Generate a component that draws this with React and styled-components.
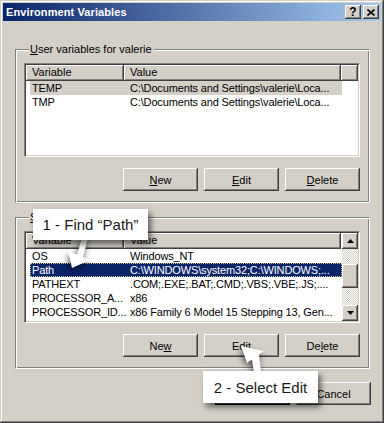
import React from "react";
import styled, { createGlobalStyle } from "styled-components";

const GlobalStyle = createGlobalStyle`
  html, body {
    margin: 0;
    padding: 0;
    background: #d4d0c8;
  }
  body {
    font-family: "Liberation Sans", Arial, sans-serif;
    font-size: 11px;
    color: #000;
  }
`;

const userVars = [
  { name: "TEMP", value: "C:\\Documents and Settings\\valerie\\Loca...", state: "inactive" },
  { name: "TMP", value: "C:\\Documents and Settings\\valerie\\Loca..." },
];

const systemVars = [
  { name: "OS", value: "Windows_NT" },
  { name: "Path", value: "C:\\WINDOWS\\system32;C:\\WINDOWS;...", state: "active" },
  { name: "PATHEXT", value: ".COM;.EXE;.BAT;.CMD;.VBS;.VBE;.JS;...." },
  { name: "PROCESSOR_A...", value: "x86" },
  { name: "PROCESSOR_ID...", value: "x86 Family 6 Model 15 Stepping 13, Gen..." },
];

const VarList = ({ rows, height, scroll }) => (
  <ListView $h={height}>
    <ListBody>
      <HeaderRow>
        <HeaderCell $w={98}>Variable</HeaderCell>
        <HeaderCell $w={217}>Value</HeaderCell>
        {!scroll && <HeaderCell $fill />}
      </HeaderRow>
      {rows.map((r) => (
        <Row key={r.name} $state={r.state}>
          <NameCell>{r.name}</NameCell>
          <ValueCell>{r.value}</ValueCell>
        </Row>
      ))}
    </ListBody>
    {scroll && (
      <ScrollBar>
        <ScrollArrow>
          <svg width="7" height="4" viewBox="0 0 7 4">
            <path d="M3.5 0 L7 4 L0 4 Z" fill="#000" />
          </svg>
        </ScrollArrow>
        <Track>
          <Thumb />
        </Track>
        <ScrollArrow>
          <svg width="7" height="4" viewBox="0 0 7 4">
            <path d="M0 0 L7 0 L3.5 4 Z" fill="#000" />
          </svg>
        </ScrollArrow>
      </ScrollBar>
    )}
  </ListView>
);

const App = () => {
  return (
    <>
      <GlobalStyle />
      <Window>
        <TitleBar>
          <Title>Environment Variables</Title>
          <CaptionButton>?</CaptionButton>
          <CaptionButton $gap>
            <svg width="8" height="7" viewBox="0 0 8 7">
              <path d="M0.5 0.5 L7.5 6.5 M7.5 0.5 L0.5 6.5" stroke="#000" strokeWidth="1.6" />
            </svg>
          </CaptionButton>
        </TitleBar>

        <Body>
          <GroupBox>
            <GroupLabel>
              <u>U</u>ser variables for valerie
            </GroupLabel>
            <VarList rows={userVars} height={94} />
            <ButtonRow>
              <PushButton>
                <u>N</u>ew
              </PushButton>
              <PushButton>
                <u>E</u>dit
              </PushButton>
              <PushButton>
                <u>D</u>elete
              </PushButton>
            </ButtonRow>
          </GroupBox>

          <GroupBox $second>
            <GroupLabel>
              <u>S</u>ystem variables
            </GroupLabel>
            <VarList rows={systemVars} height={92} scroll />
            <ButtonRow>
              <PushButton>
                Ne<u>w</u>
              </PushButton>
              <PushButton>
                Ed<u>i</u>t
              </PushButton>
              <PushButton>
                De<u>l</u>ete
              </PushButton>
            </ButtonRow>
          </GroupBox>

          <DialogRow>
            <PushButton $default>OK</PushButton>
            <PushButton>Cancel</PushButton>
          </DialogRow>
        </Body>

        {/* callout 1 with its arrow pointing at the Path row */}
        <Arrow viewBox="0 0 40 40" $x={60} $y={232}>
          <polygon points="23,2 29,2 23,25.1 30,28 12,36 8,19 17,22.7" />
        </Arrow>
        <Callout $x={33} $y={209} $h={31}>
          1 - Find “Path”
        </Callout>

        {/* callout 2 with its arrow pointing at Edit */}
        <Arrow viewBox="0 0 40 40" $x={230} $y={340}>
          <polygon points="11,6 34,11 29,14.5 31.5,35 24.5,36 22,19.5 17,23" />
        </Arrow>
        <Callout $x={203} $y={371} $h={32}>
          2 - Select Edit
        </Callout>
      </Window>
    </>
  );
};

const raised = `
  box-shadow: inset -1px -1px #404040, inset 1px 1px #fff,
    inset -2px -2px #808080, inset 2px 2px #d4d0c8;
`;

const Window = styled.div`
  position: relative;
  width: 384px;
  height: 423px;
  box-sizing: border-box;
  padding: 3px;
  background: #d4d0c8;
  box-shadow: inset -1px -1px #404040, inset 1px 1px #d4d0c8,
    inset -2px -2px #808080, inset 2px 2px #fff;
  overflow: hidden;
`;

const TitleBar = styled.div`
  height: 18px;
  display: flex;
  align-items: center;
  padding: 0 2px;
  background: linear-gradient(to right, #0a246a, #a6caf0);
  color: #fff;
  font-weight: bold;
  font-size: 11px;
`;

const Title = styled.span`
  flex: 1;
  padding-left: 1px;
  letter-spacing: 0.1px;
`;

const CaptionButton = styled.div`
  width: 16px;
  height: 14px;
  box-sizing: border-box;
  margin-left: ${(p) => (p.$gap ? "2px" : "0")};
  background: #d4d0c8;
  color: #000;
  font-size: 12px;
  font-weight: bold;
  display: flex;
  align-items: center;
  justify-content: center;
  line-height: 1;
  ${raised}
`;

const Body = styled.div`
  display: flex;
  flex-direction: column;
  padding: 22px 11px 0 12px;
`;

const GroupBox = styled.fieldset`
  margin: ${(p) => (p.$second ? "8px" : "0")} 0 0 0;
  padding: 7px 9px 11px 8px;
  min-inline-size: 0;
  border: 1px solid;
  border-color: #808080 #fff #fff #808080;
  box-shadow: inset 1px 1px #fff, inset -1px -1px #808080;
  display: flex;
  flex-direction: column;
`;

const GroupLabel = styled.legend`
  margin-left: 5px;
  padding: 0 2px 0 1px;
  background: #d4d0c8;
  line-height: 13px;
  font-size: 11px;
`;

const ListView = styled.div`
  height: ${(p) => p.$h}px;
  box-sizing: border-box;
  border: 1px solid;
  border-color: #808080 #fff #fff #808080;
  box-shadow: inset 1px 1px #404040, inset -1px -1px #d4d0c8;
  padding: 1px;
  background: #fff;
  display: flex;
`;

const ListBody = styled.div`
  flex: 1;
  min-width: 0;
  display: flex;
  flex-direction: column;
`;

const HeaderRow = styled.div`
  display: flex;
  height: 16px;
`;

const HeaderCell = styled.div`
  ${(p) => (p.$fill ? "flex: 1;" : `width: ${p.$w}px;`)}
  box-sizing: border-box;
  padding-left: 6px;
  line-height: 15px;
  background: #d4d0c8;
  box-shadow: inset -1px -1px #404040, inset 1px 1px #fff,
    inset -2px -2px #808080;
  white-space: nowrap;
`;

const Row = styled.div`
  display: flex;
  width: 312px;
  height: 14px;
  margin-left: 4px;
  line-height: 14px;
  white-space: nowrap;
  letter-spacing: -0.15px;
  box-sizing: border-box;
  background: ${(p) =>
    p.$state === "active" ? "#0a246a" : p.$state === "inactive" ? "#d4d0c8" : "transparent"};
  color: ${(p) => (p.$state === "active" ? "#fff" : "#000")};
  outline: ${(p) => (p.$state === "active" ? "1px dotted #c8c896" : "none")};
  outline-offset: -1px;
`;

const NameCell = styled.div`
  width: 94px;
  flex: none;
  padding-left: 2px;
  box-sizing: border-box;
`;

const ValueCell = styled.div`
  flex: 1;
  padding-left: 6px;
`;

const ScrollBar = styled.div`
  width: 16px;
  display: flex;
  flex-direction: column;
`;

const ScrollArrow = styled.div`
  height: 16px;
  background: #d4d0c8;
  display: flex;
  align-items: center;
  justify-content: center;
  ${raised}
`;

const Track = styled.div`
  flex: 1;
  background-color: #fff;
  background-image: conic-gradient(#d4d0c8 0 25%, #fff 0 50%, #d4d0c8 0 75%, #fff 0);
  background-size: 2px 2px;
`;

const Thumb = styled.div`
  height: 24px;
  margin-top: 15px;
  background: #d4d0c8;
  ${raised}
`;

const ButtonRow = styled.div`
  display: flex;
  justify-content: flex-end;
  gap: 6px;
  margin-top: 11px;
`;

const DialogRow = styled.div`
  display: flex;
  justify-content: flex-end;
  gap: 6px;
  margin-top: 13px;
  margin-right: -1px;
`;

const PushButton = styled.div`
  width: 75px;
  height: 23px;
  box-sizing: border-box;
  background: #d4d0c8;
  display: flex;
  align-items: center;
  justify-content: center;
  font-size: 11px;
  ${(p) =>
    p.$default
      ? `border: 1px solid #000;
         box-shadow: inset -1px -1px #404040, inset 1px 1px #fff, inset -2px -2px #808080;`
      : `box-shadow: inset -1px -1px #404040, inset 1px 1px #fff,
          inset -2px -2px #808080, inset 2px 2px #d4d0c8;`}
`;

const Callout = styled.div`
  position: absolute;
  left: ${(p) => p.$x}px;
  top: ${(p) => p.$y}px;
  width: 115px;
  height: ${(p) => p.$h}px;
  background: #fff;
  box-shadow: 3px 4px 6px rgba(0, 0, 0, 0.55);
  display: flex;
  align-items: center;
  justify-content: center;
  font-family: "Liberation Sans", Arial, sans-serif;
  font-size: 15px;
  color: #1a1a1a;
  white-space: nowrap;
`;

const Arrow = styled.svg`
  position: absolute;
  left: ${(p) => p.$x}px;
  top: ${(p) => p.$y}px;
  width: 40px;
  height: 40px;
  overflow: visible;
  pointer-events: none;
  filter: drop-shadow(-1px 3px 3px rgba(0, 0, 0, 0.65));
  polygon {
    fill: #fff;
  }
`;

export default App;
